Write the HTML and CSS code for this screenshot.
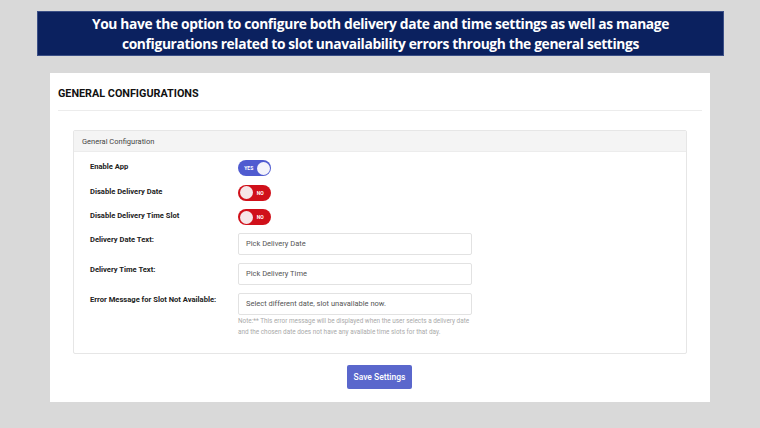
FILE: index.html
```html
<!DOCTYPE html>
<html>
<head>
<meta charset="utf-8">
<link rel="stylesheet" href="styles.css">
</head>
<body>
<div class="banner">
  <p>You have the option to configure both delivery date and time settings as well as manage</p>
  <p>configurations related to slot unavailability errors through the general settings</p>
</div>
<div class="panel">
  <h1 class="title">GENERAL CONFIGURATIONS</h1>
  <div class="divider"></div>
  <div class="section">
    <div class="section-head">General Configuration</div>
    <div class="section-body">
      <div class="row row-toggle">
        <div class="label">Enable App</div>
        <div class="toggle on"><span class="tlabel">YES</span><span class="knob"></span></div>
      </div>
      <div class="row row-toggle">
        <div class="label">Disable Delivery Date</div>
        <div class="toggle off"><span class="knob"></span><span class="tlabel">NO</span></div>
      </div>
      <div class="row row-toggle">
        <div class="label">Disable Delivery Time Slot</div>
        <div class="toggle off"><span class="knob"></span><span class="tlabel">NO</span></div>
      </div>
      <div class="row row-input">
        <div class="label">Delivery Date Text:</div>
        <div class="field"><div class="input">Pick Delivery Date</div></div>
      </div>
      <div class="row row-input">
        <div class="label">Delivery Time Text:</div>
        <div class="field"><div class="input">Pick Delivery Time</div></div>
      </div>
      <div class="row row-input last">
        <div class="label">Error Message for Slot Not Available:</div>
        <div class="field">
          <div class="input">Select different date, slot unavailable now.</div>
          <p class="note">Note:** This error message will be displayed when the user selects a delivery date and the chosen date does not have any available time slots for that day.</p>
        </div>
      </div>
    </div>
  </div>
  <div class="actions"><button class="save">Save Settings</button></div>
</div>
</body>
</html>
```

FILE: styles.css
```css
* { box-sizing: border-box; }
html, body {
  margin: 0;
  padding: 0;
  background: #d9d9d9;
  width: 760px;
  height: 428px;
  overflow: hidden;
}
body { padding-top: 11px; }

.banner {
  margin-left: 37px;
  width: 687px;
  height: 45px;
  background: #0b215f;
  border: 1px solid #3b4f86;
  display: flex;
  flex-direction: column;
  align-items: center;
  justify-content: center;
  color: #fff;
  font-family: "Open Sans", sans-serif;
  font-weight: 700;
  font-size: 13.8px;
  letter-spacing: -0.35px;
  line-height: 19.5px;
}
.banner p { margin: 0; }

.panel {
  margin-top: 17px;
  margin-left: 50px;
  width: 660px;
  height: 329px;
  background: #fff;
  padding: 0 8px 0 8px;
  font-family: Roboto, "Liberation Sans", sans-serif;
}
.title {
  margin: 0;
  padding-top: 14px;
  height: 37px;
  font-size: 10.8px;
  font-weight: 700;
  color: #111;
  line-height: 14px;
}
.divider {
  height: 1px;
  background: #ececec;
}
.section {
  margin: 19px 15px 0 15px;
  border: 1px solid #e6e6e6;
  border-radius: 2px;
}
.section-head {
  height: 21px;
  background: #f4f4f4;
  border-bottom: 1px solid #ececec;
  padding-left: 8px;
  font-size: 7.5px;
  line-height: 21px;
  color: #444;
}
.section-body {
  padding: 8px 0 15px 16px;
}
.row {
  display: flex;
  align-items: flex-start;
}
.row-toggle { height: 16px; margin-bottom: 8.5px; }
.row-toggle:nth-child(3) { margin-bottom: 8px; }
.row-input { margin-bottom: 8px; }
.row-input.last { margin-bottom: 0; }
.label {
  width: 148px;
  font-size: 7.6px;
  font-weight: 700;
  line-height: 12px;
  padding-top: 1px;
  color: #222;
}
.toggle {
  width: 33px;
  height: 16px;
  border-radius: 8px;
  display: flex;
  align-items: center;
  padding: 0 1.5px;
  gap: 3px;
}
.toggle.on { background: #4f5bd0; justify-content: flex-end; padding-left: 6px; }
.toggle.off { background: #d0101a; padding-right: 6px; }
.knob {
  width: 13px;
  height: 13px;
  border-radius: 50%;
  background: #f3f3fb;
  flex: none;
}
.toggle.off .knob { background: #f6e6e8; }
.tlabel {
  flex: 1;
  text-align: center;
  color: #fff;
  font-size: 5px;
  font-weight: 700;
  line-height: 16px;
}
.field { width: 234px; }
.input {
  height: 22px;
  border: 1px solid #e2e2e2;
  border-radius: 2px;
  padding-left: 7px;
  font-size: 7.5px;
  line-height: 20px;
  color: #555;
}
.note {
  margin: 1px 0 0 0;
  font-size: 6.4px;
  line-height: 11px;
  color: #aaa;
}
.actions {
  display: flex;
  justify-content: center;
  padding-top: 11px;
  padding-right: 1px;
}
.save {
  width: 65px;
  height: 24px;
  border: none;
  border-radius: 2px;
  background: #5a67cc;
  color: #fff;
  font-family: Roboto, sans-serif;
  font-size: 8.5px;
  font-weight: 500;
  padding: 0;
}
```
